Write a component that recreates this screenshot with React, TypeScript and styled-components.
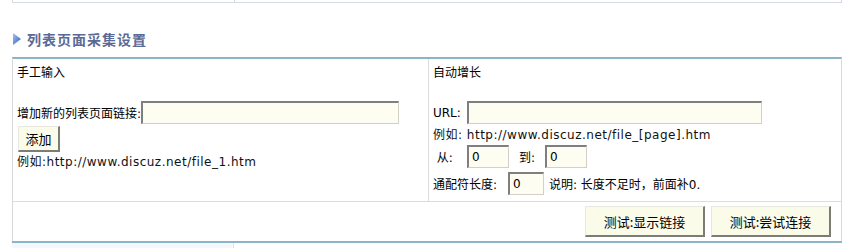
import React from "react";
import styled, { createGlobalStyle } from "styled-components";

const Global = createGlobalStyle`
  html, body { margin: 0; padding: 0; background: #fff; }
  body { font-family: "DejaVu Sans", "Noto Sans CJK SC", sans-serif; font-size: 12px; color: #000; }
  * { box-sizing: border-box; }
`;

const Page = styled.div`
  width: 857px;
  height: 248px;
  overflow: hidden;
  padding: 0 15px 0 12px;
`;

const PrevTable = styled.div`
  display: grid;
  grid-template-columns: 221px 1fr;
  height: 3px;
  border-left: 1px solid #d6dbe3;
  border-right: 1px solid #d6dbe3;
  border-bottom: 1px solid #d6dbe3;
  & > div + div { border-left: 1px solid #d6dbe3; }
`;

const Title = styled.h3`
  display: flex;
  align-items: center;
  gap: 6px;
  margin: 26px 0 0 1px;
  height: 20px;
  font-family: "Noto Sans CJK SC", sans-serif;
  font-size: 14px;
  font-weight: 700;
  color: #5a6a96;
  letter-spacing: 1px;
`;

const Table = styled.div`
  margin-top: 8px;
  border-top: 2px solid #8db3c9;
  border-left: 1px solid #d8d8d8;
  border-right: 1px solid #d8d8d8;
`;

const Row = styled.div`
  display: grid;
  grid-template-columns: 415px 1fr;
  height: 143px;
  border-bottom: 1px solid #dcdcdc;
`;

const Cell = styled.div<{ $divider?: boolean }>`
  padding: 4px 0 0 4px;
  display: flex;
  flex-direction: column;
  align-items: flex-start;
  ${(p) => (p.$divider ? "border-left: 1px solid #dcdcdc;" : "")}
`;

const Heading = styled.div`
  height: 18px;
  line-height: 18px;
  font-family: "Noto Sans CJK SC", sans-serif;
  font-size: 12px;
`;

const Line = styled.div<{ $top?: number; $h?: number }>`
  display: flex;
  align-items: center;
  margin-top: ${(p) => p.$top ?? 0}px;
  height: ${(p) => p.$h ?? 23}px;
  white-space: nowrap;
`;

const Label = styled.span<{ $w?: number }>`
  font-size: 12px;
  ${(p) => (p.$w ? `width: ${p.$w}px;` : "")}
`;

const Example = styled.span`
  font-size: 12px;
  letter-spacing: 0.5px;
  color: #111;
`;

const Field = styled.input<{ $w: number }>`
  width: ${(p) => p.$w}px;
  height: 23px;
  padding: 2px 3px;
  background: #fdfdf2;
  border-style: solid;
  border-width: 2px 1px 1px 2px;
  border-color: #7f7f7f #d4d0c8 #d4d0c8 #7f7f7f;
  font-family: "DejaVu Sans", sans-serif;
  font-size: 12px;
  color: #000;
  outline: none;
`;

const Button = styled.button<{ $w: number; $h: number }>`
  width: ${(p) => p.$w}px;
  height: ${(p) => p.$h}px;
  padding: 0;
  background: #fbfbea;
  border-style: solid;
  border-width: 1px 2px 2px 1px;
  border-color: #e8e8e0 #7c7c74 #7c7c74 #e8e8e0;
  font-family: "Noto Sans CJK SC", sans-serif;
  font-size: 13px;
  color: #000;
`;

const ButtonRow = styled.div`
  display: flex;
  justify-content: flex-end;
  align-items: center;
  gap: 6px;
  height: 39px;
  padding-right: 10px;
`;

const NextTable = styled.div`
  display: grid;
  grid-template-columns: 221px 1fr;
  height: 10px;
  border-top: 2px solid #8db3c9;
  background: #f2f8fb;
  & > div + div { border-left: 1px solid #dce4ea; background: #fff; }
`;

const Arrow = () => (
  <svg width="8" height="12" viewBox="0 0 8 12">
    <defs>
      <linearGradient id="ag" x1="0" y1="0" x2="1" y2="1">
        <stop offset="0" stopColor="#a6c4ee" />
        <stop offset="1" stopColor="#2d5fb8" />
      </linearGradient>
    </defs>
    <polygon points="0,0 8,6 0,12" fill="url(#ag)" />
  </svg>
);

export default function App() {
  return (
    <>
      <Global />
      <Page>
        <PrevTable>
          <div />
          <div />
        </PrevTable>
        <Title>
          <Arrow />
          列表页面采集设置
        </Title>
        <Table>
          <Row>
            <Cell>
              <Heading>手工输入</Heading>
              <Line $top={20}>
                <Label>增加新的列表页面链接:</Label>
                <Field $w={258} defaultValue="" />
              </Line>
              <Line $top={2} $h={26}>
                <Button $w={42} $h={26} style={{ marginLeft: 1 }}>添加</Button>
              </Line>
              <Line $top={1} $h={14}>
                <Example>例如:http://www.discuz.net/file_1.htm</Example>
              </Line>
            </Cell>
            <Cell $divider>
              <Heading>自动增长</Heading>
              <Line $top={20}>
                <Label $w={34}>URL:</Label>
                <Field $w={295} defaultValue="" />
              </Line>
              <Line $top={1} $h={17}>
                <Example>例如: http://www.discuz.net/file_[page].htm</Example>
              </Line>
              <Line $top={3}>
                <Label $w={34}>&nbsp;从:</Label>
                <Field $w={42} defaultValue="0" />
                <Label $w={36} style={{ paddingLeft: 10 }}>到:</Label>
                <Field $w={42} defaultValue="0" />
              </Line>
              <Line $top={4}>
                <Label $w={75}>通配符长度:</Label>
                <Field $w={36} defaultValue="0" />
                <Label style={{ marginLeft: 5 }}>说明: 长度不足时，前面补0.</Label>
              </Line>
            </Cell>
          </Row>
          <ButtonRow>
            <Button $w={120} $h={31}>测试:显示链接</Button>
            <Button $w={120} $h={31}>测试:尝试连接</Button>
          </ButtonRow>
        </Table>
        <NextTable>
          <div />
          <div />
        </NextTable>
      </Page>
    </>
  );
}
